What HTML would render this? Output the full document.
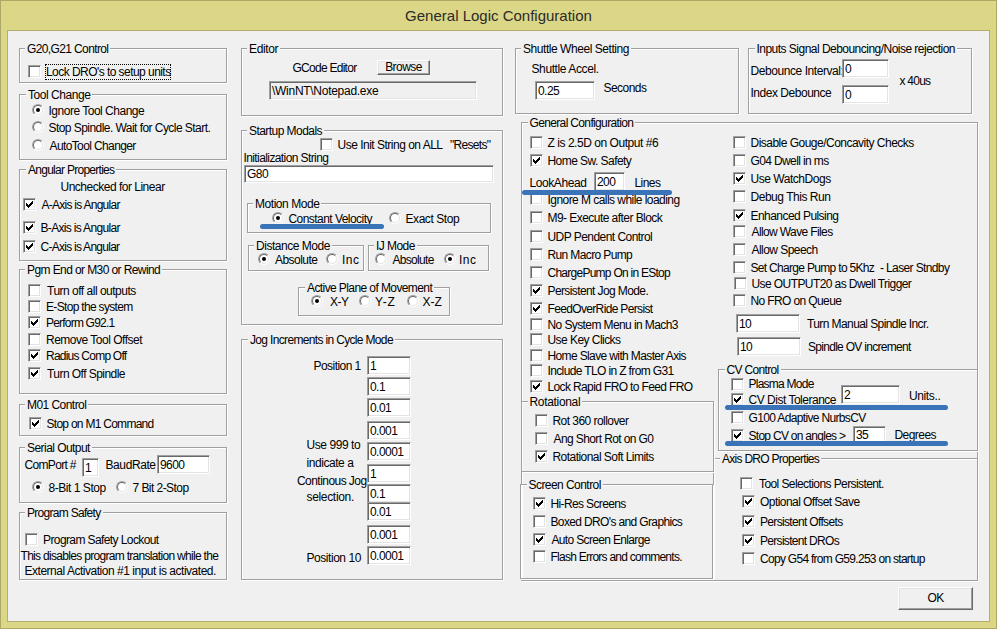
<!DOCTYPE html>
<html><head><meta charset="utf-8"><title>General Logic Configuration</title><style>
html,body{margin:0;padding:0;}
body{width:997px;height:629px;position:relative;overflow:hidden;background:#dcd687;font-family:"Liberation Sans",sans-serif;}
#frame{position:absolute;left:0;top:0;width:995px;height:627px;border:1px solid #aea867;background:#dcd687;}
#title{position:absolute;left:0;top:6px;width:997px;text-align:center;font-size:15px;color:#2b2b2b;line-height:20px;}
#client{position:absolute;left:8px;top:31px;width:981px;height:590px;background:#f0f0f0;box-shadow:0 0 0 1px #b5ae6c;}
#c{position:absolute;left:0;top:0;width:997px;height:629px;}
.t,.gt{position:absolute;font-size:12px;line-height:13px;white-space:pre;color:#000;letter-spacing:-0.55px;}
.gt{background:#f0f0f0;padding:0 2px;margin-left:-2px;}
.g{position:absolute;border:1px solid #a0a0a0;box-shadow:1px 1px 0 0 #fff, inset 1px 1px 0 0 #fff;}
.cb{position:absolute;width:9px;height:9px;background:#fff;border:1px solid;border-color:#a0a0a0 #fff #fff #a0a0a0;box-shadow:inset 1px 1px 0 0 #696969, inset -1px -1px 0 0 #e3e3e3;padding:1px;}
.cb svg{position:absolute;left:2px;top:2px;}
.rb{position:absolute;width:10px;height:10px;border-radius:50%;border:1px solid;border-color:#a0a0a0 #fff #fff #a0a0a0;background:#f0f0f0;}
.ri{position:absolute;left:0;top:0;width:8px;height:8px;border-radius:50%;border:1px solid;border-color:#696969 #e3e3e3 #e3e3e3 #696969;background:#fff;}
.rd{position:absolute;left:3px;top:3px;width:4px;height:4px;border-radius:50%;background:#000;}
.ed{position:absolute;border:1px solid;border-color:#a0a0a0 #fff #fff #a0a0a0;box-shadow:inset 1px 1px 0 0 #696969, inset -1px -1px 0 0 #e3e3e3;padding:1px;overflow:hidden;}
.ed span{position:absolute;left:2px;top:3px;font-size:12px;line-height:13px;white-space:pre;letter-spacing:-0.55px;}
.btn{position:absolute;box-sizing:border-box;background:#f0f0f0;border:1px solid;border-color:#fff #696969 #696969 #fff;box-shadow:inset -1px -1px 0 0 #a0a0a0, inset 1px 1px 0 0 #e3e3e3;text-align:center;}
.btn span{font-size:12px;line-height:13px;display:block;letter-spacing:-0.55px;}
.bl{position:absolute;background:#3a73b8;border-radius:3px;}
.focus{position:absolute;border:1px dotted #000;box-sizing:border-box;}
</style></head><body>
<div id="frame"></div>
<div id="title">General Logic Configuration</div>
<div id="client"></div>
<div id="c">
<div class="g" style="left:19px;top:48px;width:206px;height:33px"></div>
<div class="gt" style="left:27.0px;top:43px;letter-spacing:-0.621px">G20,G21 Control</div>
<div class="cb" style="left:28px;top:65px"></div>
<div class="focus" style="left:45px;top:64px;width:126px;height:16px"></div>
<div class="t" style="left:46.0px;top:66px">Lock DRO&#x27;s to setup units</div>
<div class="g" style="left:19px;top:94px;width:206px;height:64px"></div>
<div class="gt" style="left:28.0px;top:89px;letter-spacing:-0.450px">Tool Change</div>
<div class="rb" style="left:32px;top:104px"><div class="ri"></div><div class="rd"></div></div>
<div class="t" style="left:48.5px;top:105px;letter-spacing:-0.491px">Ignore Tool Change</div>
<div class="rb" style="left:32px;top:121px"><div class="ri"></div></div>
<div class="t" style="left:48.5px;top:122px">Stop Spindle. Wait for Cycle Start.</div>
<div class="rb" style="left:32px;top:139px"><div class="ri"></div></div>
<div class="t" style="left:49.5px;top:140px;letter-spacing:-0.617px">AutoTool Changer</div>
<div class="g" style="left:19px;top:169px;width:206px;height:90px"></div>
<div class="gt" style="left:28.0px;top:164px;letter-spacing:-0.726px">Angular Properties</div>
<div class="t" style="left:60.5px;top:181px;letter-spacing:-0.497px">Unchecked for Linear</div>
<div class="cb" style="left:23px;top:198px"><svg width="7" height="7"><path d="M6 0h1v3h-1v1h-1v1h-1v1h-1v1h-1v-1h-1v-1h-1v-3h1v1h1v1h1v-1h1v-1h1v-1h1z" fill="#000"/></svg></div>
<div class="t" style="left:41.5px;top:199px;letter-spacing:-0.738px">A-Axis is Angular</div>
<div class="cb" style="left:23px;top:221px"><svg width="7" height="7"><path d="M6 0h1v3h-1v1h-1v1h-1v1h-1v1h-1v-1h-1v-1h-1v-3h1v1h1v1h1v-1h1v-1h1v-1h1z" fill="#000"/></svg></div>
<div class="t" style="left:40.5px;top:222px;letter-spacing:-0.675px">B-Axis is Angular</div>
<div class="cb" style="left:23px;top:240px"><svg width="7" height="7"><path d="M6 0h1v3h-1v1h-1v1h-1v1h-1v1h-1v-1h-1v-1h-1v-3h1v1h1v1h1v-1h1v-1h1v-1h1z" fill="#000"/></svg></div>
<div class="t" style="left:40.5px;top:241px;letter-spacing:-0.738px">C-Axis is Angular</div>
<div class="g" style="left:19px;top:269px;width:206px;height:123px"></div>
<div class="gt" style="left:27.0px;top:264px;letter-spacing:-0.593px">Pgm End or M30 or Rewind</div>
<div class="cb" style="left:28px;top:284px"></div>
<div class="t" style="left:47.0px;top:285px;letter-spacing:-0.497px">Turn off all outputs</div>
<div class="cb" style="left:28px;top:300px"></div>
<div class="t" style="left:46.0px;top:301px;letter-spacing:-0.675px">E-Stop the system</div>
<div class="cb" style="left:28px;top:316px"><svg width="7" height="7"><path d="M6 0h1v3h-1v1h-1v1h-1v1h-1v1h-1v-1h-1v-1h-1v-3h1v1h1v1h1v-1h1v-1h1v-1h1z" fill="#000"/></svg></div>
<div class="t" style="left:46.0px;top:317px;letter-spacing:-0.800px">Perform G92.1</div>
<div class="cb" style="left:28px;top:333px"></div>
<div class="t" style="left:46.0px;top:334px;letter-spacing:-0.491px">Remove Tool Offset</div>
<div class="cb" style="left:28px;top:349px"><svg width="7" height="7"><path d="M6 0h1v3h-1v1h-1v1h-1v1h-1v1h-1v-1h-1v-1h-1v-3h1v1h1v1h1v-1h1v-1h1v-1h1z" fill="#000"/></svg></div>
<div class="t" style="left:46.0px;top:350px;letter-spacing:-0.764px">Radius Comp Off</div>
<div class="cb" style="left:28px;top:367px"><svg width="7" height="7"><path d="M6 0h1v3h-1v1h-1v1h-1v1h-1v1h-1v-1h-1v-1h-1v-3h1v1h1v1h1v-1h1v-1h1v-1h1z" fill="#000"/></svg></div>
<div class="t" style="left:47.0px;top:368px">Turn Off Spindle</div>
<div class="g" style="left:19px;top:404px;width:206px;height:30px"></div>
<div class="gt" style="left:27.0px;top:399px">M01 Control</div>
<div class="cb" style="left:29px;top:417px"><svg width="7" height="7"><path d="M6 0h1v3h-1v1h-1v1h-1v1h-1v1h-1v-1h-1v-1h-1v-3h1v1h1v1h1v-1h1v-1h1v-1h1z" fill="#000"/></svg></div>
<div class="t" style="left:46.5px;top:418px;letter-spacing:-0.726px">Stop on M1 Command</div>
<div class="g" style="left:19px;top:447px;width:206px;height:54px"></div>
<div class="gt" style="left:27.0px;top:442px">Serial Output</div>
<div class="t" style="left:24.5px;top:459px;letter-spacing:-0.675px">ComPort #</div>
<div class="ed" style="left:82px;top:458px;width:13px;height:15px;background:#fff"><span style="top:3px">1</span></div>
<div class="t" style="left:105.5px;top:459px;letter-spacing:-0.407px">BaudRate</div>
<div class="ed" style="left:157px;top:455px;width:49px;height:15px;background:#fff"><span style="top:3px">9600</span></div>
<div class="rb" style="left:32px;top:481px"><div class="ri"></div><div class="rd"></div></div>
<div class="t" style="left:48.5px;top:482px;letter-spacing:-0.459px">8-Bit 1 Stop</div>
<div class="rb" style="left:116px;top:481px"><div class="ri"></div></div>
<div class="t" style="left:132.5px;top:482px">7 Bit 2-Stop</div>
<div class="g" style="left:19px;top:512px;width:206px;height:66px"></div>
<div class="gt" style="left:27.0px;top:507px;letter-spacing:-0.704px">Program Safety</div>
<div class="cb" style="left:25px;top:533px"></div>
<div class="t" style="left:43.0px;top:534px;letter-spacing:-0.598px">Program Safety Lockout</div>
<div class="t" style="left:20.5px;top:550px;letter-spacing:-0.693px">This disables program translation while the</div>
<div class="t" style="left:24.5px;top:565px;letter-spacing:-0.477px">External Activation #1 input is activated.</div>
<div class="g" style="left:241px;top:48px;width:260px;height:66px"></div>
<div class="gt" style="left:249.0px;top:43px;letter-spacing:-0.350px">Editor</div>
<div class="t" style="left:292.5px;top:62px;letter-spacing:-0.732px">GCode Editor</div>
<div class="btn" style="left:377px;top:60px;width:53px;height:15px"><span style="margin-top:0px">Browse</span></div>
<div class="ed" style="left:269px;top:81px;width:204px;height:15px;background:#f0f0f0"><span style="top:3px;letter-spacing:-0.28px">\WinNT\Notepad.exe</span></div>
<div class="g" style="left:241px;top:130px;width:260px;height:193px"></div>
<div class="gt" style="left:249.0px;top:125px">Startup Modals</div>
<div class="cb" style="left:320px;top:138px"></div>
<div class="t" style="left:337.5px;top:139px;letter-spacing:-0.502px">Use Init String on ALL</div>
<div class="t" style="left:450.0px;top:139px;letter-spacing:-0.693px">&quot;Resets&quot;</div>
<div class="t" style="left:243.5px;top:152px;letter-spacing:-0.600px">Initialization String</div>
<div class="ed" style="left:244px;top:165px;width:246px;height:14px;background:#fff"><span style="top:2px">G80</span></div>
<div class="g" style="left:247px;top:203px;width:242px;height:28px"></div>
<div class="gt" style="left:255.0px;top:198px;letter-spacing:-0.450px">Motion Mode</div>
<div class="rb" style="left:272px;top:212px"><div class="ri"></div><div class="rd"></div></div>
<div class="t" style="left:288.5px;top:213px">Constant Velocity</div>
<div class="rb" style="left:389px;top:212px"><div class="ri"></div></div>
<div class="t" style="left:405.5px;top:213px;letter-spacing:-0.439px">Exact Stop</div>
<div class="bl" style="left:260px;top:224px;width:124px;height:5px"></div>
<div class="g" style="left:248px;top:245px;width:114px;height:24px"></div>
<div class="gt" style="left:256.0px;top:240px;letter-spacing:-0.467px">Distance Mode</div>
<div class="rb" style="left:258px;top:253px"><div class="ri"></div><div class="rd"></div></div>
<div class="t" style="left:275.0px;top:254px">Absolute</div>
<div class="rb" style="left:326px;top:253px"><div class="ri"></div></div>
<div class="t" style="left:342.0px;top:254px;letter-spacing:0.450px">Inc</div>
<div class="g" style="left:368px;top:245px;width:119px;height:24px"></div>
<div class="gt" style="left:376.0px;top:240px">IJ Mode</div>
<div class="rb" style="left:375px;top:253px"><div class="ri"></div></div>
<div class="t" style="left:392.5px;top:254px;letter-spacing:-0.693px">Absolute</div>
<div class="rb" style="left:444px;top:253px"><div class="ri"></div><div class="rd"></div></div>
<div class="t" style="left:459.0px;top:254px;letter-spacing:0.450px">Inc</div>
<div class="g" style="left:298px;top:287px;width:150px;height:27px"></div>
<div class="gt" style="left:307.0px;top:282px;letter-spacing:-0.593px">Active Plane of Movement</div>
<div class="rb" style="left:311px;top:295px"><div class="ri"></div><div class="rd"></div></div>
<div class="t" style="left:330.0px;top:296px">X-Y</div>
<div class="rb" style="left:359px;top:295px"><div class="ri"></div></div>
<div class="t" style="left:375.0px;top:296px;letter-spacing:0.800px">Y-Z</div>
<div class="rb" style="left:407px;top:295px"><div class="ri"></div></div>
<div class="t" style="left:422.5px;top:296px;letter-spacing:-0.050px">X-Z</div>
<div class="g" style="left:241px;top:339px;width:260px;height:239px"></div>
<div class="gt" style="left:250.0px;top:334px;letter-spacing:-0.661px">Jog Increments in Cycle Mode</div>
<div class="t" style="left:313.5px;top:360px">Position 1</div>
<div class="ed" style="left:367px;top:356px;width:40px;height:15px;background:#fff"><span style="top:3px">1</span></div>
<div class="ed" style="left:367px;top:377px;width:40px;height:15px;background:#fff"><span style="top:3px">0.1</span></div>
<div class="ed" style="left:367px;top:398px;width:40px;height:15px;background:#fff"><span style="top:3px">0.01</span></div>
<div class="ed" style="left:367px;top:421px;width:40px;height:15px;background:#fff"><span style="top:3px">0.001</span></div>
<div class="ed" style="left:367px;top:442px;width:40px;height:15px;background:#fff"><span style="top:3px">0.0001</span></div>
<div class="ed" style="left:367px;top:464px;width:40px;height:15px;background:#fff"><span style="top:3px">1</span></div>
<div class="ed" style="left:367px;top:484px;width:40px;height:15px;background:#fff"><span style="top:3px">0.1</span></div>
<div class="ed" style="left:367px;top:502px;width:40px;height:15px;background:#fff"><span style="top:3px">0.01</span></div>
<div class="ed" style="left:367px;top:525px;width:40px;height:15px;background:#fff"><span style="top:3px">0.001</span></div>
<div class="ed" style="left:367px;top:546px;width:40px;height:15px;background:#fff"><span style="top:3px">0.0001</span></div>
<div class="t" style="left:306.5px;top:439px;letter-spacing:-0.439px">Use 999 to</div>
<div class="t" style="left:306.5px;top:457px;letter-spacing:-0.439px">indicate a</div>
<div class="t" style="left:297.0px;top:475px">Continous Jog</div>
<div class="t" style="left:306.5px;top:491px;letter-spacing:-0.328px">selection.</div>
<div class="t" style="left:306.5px;top:552px;letter-spacing:-0.450px">Position 10</div>
<div class="g" style="left:515px;top:48px;width:222px;height:64px"></div>
<div class="gt" style="left:523.0px;top:43px;letter-spacing:-0.450px">Shuttle Wheel Setting</div>
<div class="t" style="left:531.5px;top:63px;letter-spacing:-0.396px">Shuttle Accel.</div>
<div class="ed" style="left:535px;top:81px;width:56px;height:15px;background:#fff"><span style="top:3px">0.25</span></div>
<div class="t" style="left:603.5px;top:82px">Seconds</div>
<div class="g" style="left:748px;top:48px;width:222px;height:64px"></div>
<div class="gt" style="left:756.5px;top:43px;letter-spacing:-0.524px">Inputs Signal Debouncing/Noise rejection</div>
<div class="t" style="left:750.5px;top:65px;letter-spacing:-0.432px">Debounce Interval:</div>
<div class="ed" style="left:842px;top:59px;width:43px;height:15px;background:#fff"><span style="top:3px">0</span></div>
<div class="t" style="left:750.5px;top:87px;letter-spacing:-0.473px">Index Debounce</div>
<div class="ed" style="left:842px;top:85px;width:43px;height:15px;background:#fff"><span style="top:3px">0</span></div>
<div class="t" style="left:899.5px;top:75px;letter-spacing:-0.750px">x 40us</div>
<div class="g" style="left:521px;top:122px;width:455px;height:457px"></div>
<div class="gt" style="left:529.5px;top:117px;letter-spacing:-0.650px">General Configuration</div>
<div class="cb" style="left:530px;top:136px"></div>
<div class="t" style="left:547.5px;top:137px;letter-spacing:-0.455px">Z is 2.5D on Output #6</div>
<div class="cb" style="left:530px;top:154px"><svg width="7" height="7"><path d="M6 0h1v3h-1v1h-1v1h-1v1h-1v1h-1v-1h-1v-1h-1v-3h1v1h1v1h1v-1h1v-1h1v-1h1z" fill="#000"/></svg></div>
<div class="t" style="left:547.5px;top:155px">Home Sw. Safety</div>
<div class="t" style="left:529.5px;top:177px;letter-spacing:-0.425px">LookAhead</div>
<div class="ed" style="left:594px;top:172px;width:27px;height:15px;background:#fff"><span style="top:3px">200</span></div>
<div class="t" style="left:634.5px;top:177px">Lines</div>
<div class="cb" style="left:530px;top:192px"></div>
<div class="t" style="left:547.5px;top:194px">Ignore M calls while loading</div>
<div class="bl" style="left:522px;top:190px;width:150px;height:5px"></div>
<div class="cb" style="left:530px;top:211px"></div>
<div class="t" style="left:547.5px;top:212px">M9- Execute after Block</div>
<div class="cb" style="left:530px;top:230px"></div>
<div class="t" style="left:547.5px;top:231px">UDP Pendent Control</div>
<div class="cb" style="left:530px;top:248px"></div>
<div class="t" style="left:547.5px;top:249px;letter-spacing:-0.627px">Run Macro Pump</div>
<div class="cb" style="left:530px;top:266px"></div>
<div class="t" style="left:547.5px;top:267px;letter-spacing:-0.740px">ChargePump On in EStop</div>
<div class="cb" style="left:530px;top:284px"><svg width="7" height="7"><path d="M6 0h1v3h-1v1h-1v1h-1v1h-1v1h-1v-1h-1v-1h-1v-3h1v1h1v1h1v-1h1v-1h1v-1h1z" fill="#000"/></svg></div>
<div class="t" style="left:547.5px;top:285px;letter-spacing:-0.603px">Persistent Jog Mode.</div>
<div class="cb" style="left:530px;top:302px"><svg width="7" height="7"><path d="M6 0h1v3h-1v1h-1v1h-1v1h-1v1h-1v-1h-1v-1h-1v-3h1v1h1v1h1v-1h1v-1h1v-1h1z" fill="#000"/></svg></div>
<div class="t" style="left:547.5px;top:303px;letter-spacing:-0.655px">FeedOverRide Persist</div>
<div class="cb" style="left:530px;top:318px"></div>
<div class="t" style="left:547.5px;top:319px;letter-spacing:-0.595px">No System Menu in Mach3</div>
<div class="cb" style="left:530px;top:333px"></div>
<div class="t" style="left:547.5px;top:334px">Use Key Clicks</div>
<div class="cb" style="left:530px;top:349px"></div>
<div class="t" style="left:547.5px;top:350px;letter-spacing:-0.627px">Home Slave with Master Axis</div>
<div class="cb" style="left:530px;top:364px"></div>
<div class="t" style="left:547.5px;top:365px;letter-spacing:-0.633px">Include TLO in Z from G31</div>
<div class="cb" style="left:530px;top:380px"><svg width="7" height="7"><path d="M6 0h1v3h-1v1h-1v1h-1v1h-1v1h-1v-1h-1v-1h-1v-3h1v1h1v1h1v-1h1v-1h1v-1h1z" fill="#000"/></svg></div>
<div class="t" style="left:547.5px;top:381px;letter-spacing:-0.630px">Lock Rapid FRO to Feed FRO</div>
<div class="g" style="left:713px;top:458px;width:263px;height:121px"></div>
<div class="gt" style="left:722.0px;top:453px;letter-spacing:-0.717px">Axis DRO Properties</div>
<div class="g" style="left:521px;top:401px;width:191px;height:69px"></div>
<div class="gt" style="left:529.5px;top:396px;letter-spacing:-0.328px">Rotational</div>
<div class="cb" style="left:535px;top:414px"></div>
<div class="t" style="left:552.5px;top:415px">Rot 360 rollover</div>
<div class="cb" style="left:535px;top:432px"></div>
<div class="t" style="left:553.5px;top:433px;letter-spacing:-0.606px">Ang Short Rot on G0</div>
<div class="cb" style="left:535px;top:450px"><svg width="7" height="7"><path d="M6 0h1v3h-1v1h-1v1h-1v1h-1v1h-1v-1h-1v-1h-1v-3h1v1h1v1h1v-1h1v-1h1v-1h1z" fill="#000"/></svg></div>
<div class="t" style="left:552.5px;top:451px">Rotational Soft Limits</div>
<div class="g" style="left:520px;top:484px;width:191px;height:93px"></div>
<div class="gt" style="left:528.5px;top:479px">Screen Control</div>
<div class="cb" style="left:533px;top:497px"><svg width="7" height="7"><path d="M6 0h1v3h-1v1h-1v1h-1v1h-1v1h-1v-1h-1v-1h-1v-3h1v1h1v1h1v-1h1v-1h1v-1h1z" fill="#000"/></svg></div>
<div class="t" style="left:550.5px;top:498px;letter-spacing:-0.627px">Hi-Res Screens</div>
<div class="cb" style="left:533px;top:515px"></div>
<div class="t" style="left:550.5px;top:516px;letter-spacing:-0.637px">Boxed DRO&#x27;s and Graphics</div>
<div class="cb" style="left:533px;top:533px"><svg width="7" height="7"><path d="M6 0h1v3h-1v1h-1v1h-1v1h-1v1h-1v-1h-1v-1h-1v-3h1v1h1v1h1v-1h1v-1h1v-1h1z" fill="#000"/></svg></div>
<div class="t" style="left:551.5px;top:534px;letter-spacing:-0.661px">Auto Screen Enlarge</div>
<div class="cb" style="left:533px;top:550px"></div>
<div class="t" style="left:550.5px;top:551px;letter-spacing:-0.750px">Flash Errors and comments.</div>
<div class="cb" style="left:733px;top:136px"></div>
<div class="t" style="left:750.5px;top:137px;letter-spacing:-0.516px">Disable Gouge/Concavity Checks</div>
<div class="cb" style="left:733px;top:154px"></div>
<div class="t" style="left:750.5px;top:155px;letter-spacing:-0.621px">G04 Dwell in ms</div>
<div class="cb" style="left:733px;top:172px"><svg width="7" height="7"><path d="M6 0h1v3h-1v1h-1v1h-1v1h-1v1h-1v-1h-1v-1h-1v-3h1v1h1v1h1v-1h1v-1h1v-1h1z" fill="#000"/></svg></div>
<div class="t" style="left:750.5px;top:173px;letter-spacing:-0.467px">Use WatchDogs</div>
<div class="cb" style="left:733px;top:190px"></div>
<div class="t" style="left:750.5px;top:191px;letter-spacing:-0.473px">Debug This Run</div>
<div class="cb" style="left:733px;top:209px"><svg width="7" height="7"><path d="M6 0h1v3h-1v1h-1v1h-1v1h-1v1h-1v-1h-1v-1h-1v-3h1v1h1v1h1v-1h1v-1h1v-1h1z" fill="#000"/></svg></div>
<div class="t" style="left:750.5px;top:210px">Enhanced Pulsing</div>
<div class="cb" style="left:733px;top:225px"></div>
<div class="t" style="left:751.5px;top:226px;letter-spacing:-0.617px">Allow Wave Files</div>
<div class="cb" style="left:733px;top:243px"></div>
<div class="t" style="left:751.5px;top:244px">Allow Speech</div>
<div class="cb" style="left:733px;top:261px"></div>
<div class="t" style="left:750.5px;top:262px;letter-spacing:-0.686px">Set Charge Pump to 5Khz</div>
<div class="t" style="left:880.0px;top:262px;letter-spacing:-0.627px">- Laser Stndby</div>
<div class="cb" style="left:734px;top:277px"></div>
<div class="t" style="left:751.5px;top:278px;letter-spacing:-0.586px">Use OUTPUT20 as Dwell Trigger</div>
<div class="cb" style="left:733px;top:294px"></div>
<div class="t" style="left:750.5px;top:295px;letter-spacing:-0.621px">No FRO on Queue</div>
<div class="ed" style="left:736px;top:314px;width:60px;height:15px;background:#fff"><span style="top:3px">10</span></div>
<div class="t" style="left:807.0px;top:318px;letter-spacing:-0.592px">Turn Manual Spindle Incr.</div>
<div class="ed" style="left:737px;top:337px;width:60px;height:15px;background:#fff"><span style="top:3px">10</span></div>
<div class="t" style="left:808.0px;top:341px;letter-spacing:-0.708px">Spindle OV increment</div>
<div class="g" style="left:718px;top:369px;width:258px;height:80px"></div>
<div class="gt" style="left:726.5px;top:364px;letter-spacing:-0.661px">CV Control</div>
<div class="cb" style="left:731px;top:378px"></div>
<div class="t" style="left:748.5px;top:378px;letter-spacing:-0.750px">Plasma Mode</div>
<div class="cb" style="left:731px;top:393px"><svg width="7" height="7"><path d="M6 0h1v3h-1v1h-1v1h-1v1h-1v1h-1v-1h-1v-1h-1v-3h1v1h1v1h1v-1h1v-1h1v-1h1z" fill="#000"/></svg></div>
<div class="t" style="left:748.5px;top:394px;letter-spacing:-0.488px">CV Dist Tolerance</div>
<div class="ed" style="left:841px;top:385px;width:55px;height:15px;background:#fff"><span style="top:3px">2</span></div>
<div class="t" style="left:909.0px;top:390px;letter-spacing:-0.383px">Units..</div>
<div class="bl" style="left:725px;top:405px;width:223px;height:5px"></div>
<div class="cb" style="left:731px;top:411px"></div>
<div class="t" style="left:748.5px;top:412px;letter-spacing:-0.650px">G100 Adaptive NurbsCV</div>
<div class="cb" style="left:731px;top:429px"><svg width="7" height="7"><path d="M6 0h1v3h-1v1h-1v1h-1v1h-1v1h-1v-1h-1v-1h-1v-3h1v1h1v1h1v-1h1v-1h1v-1h1z" fill="#000"/></svg></div>
<div class="t" style="left:748.5px;top:430px;letter-spacing:-0.717px">Stop CV on angles &gt;</div>
<div class="ed" style="left:853px;top:426px;width:29px;height:13px;background:#fff"><span style="top:2px">35</span></div>
<div class="t" style="left:894.5px;top:429px">Degrees</div>
<div class="bl" style="left:725px;top:441px;width:223px;height:5px"></div>
<div class="cb" style="left:740px;top:477px"></div>
<div class="t" style="left:759.0px;top:478px;letter-spacing:-0.588px">Tool Selections Persistent.</div>
<div class="cb" style="left:742px;top:495px"><svg width="7" height="7"><path d="M6 0h1v3h-1v1h-1v1h-1v1h-1v1h-1v-1h-1v-1h-1v-3h1v1h1v1h1v-1h1v-1h1v-1h1z" fill="#000"/></svg></div>
<div class="t" style="left:760.0px;top:496px">Optional Offset Save</div>
<div class="cb" style="left:742px;top:515px"><svg width="7" height="7"><path d="M6 0h1v3h-1v1h-1v1h-1v1h-1v1h-1v-1h-1v-1h-1v-3h1v1h1v1h1v-1h1v-1h1v-1h1z" fill="#000"/></svg></div>
<div class="t" style="left:760.0px;top:516px;letter-spacing:-0.668px">Persistent Offsets</div>
<div class="cb" style="left:742px;top:534px"><svg width="7" height="7"><path d="M6 0h1v3h-1v1h-1v1h-1v1h-1v1h-1v-1h-1v-1h-1v-3h1v1h1v1h1v-1h1v-1h1v-1h1z" fill="#000"/></svg></div>
<div class="t" style="left:760.0px;top:535px;letter-spacing:-0.693px">Persistent DROs</div>
<div class="cb" style="left:742px;top:552px"></div>
<div class="t" style="left:760.0px;top:553px;letter-spacing:-0.711px">Copy G54 from G59.253 on startup</div>
<div class="btn" style="left:898px;top:587px;width:75px;height:23px"><span style="margin-top:4px">OK</span></div>
</div>
</body></html>
